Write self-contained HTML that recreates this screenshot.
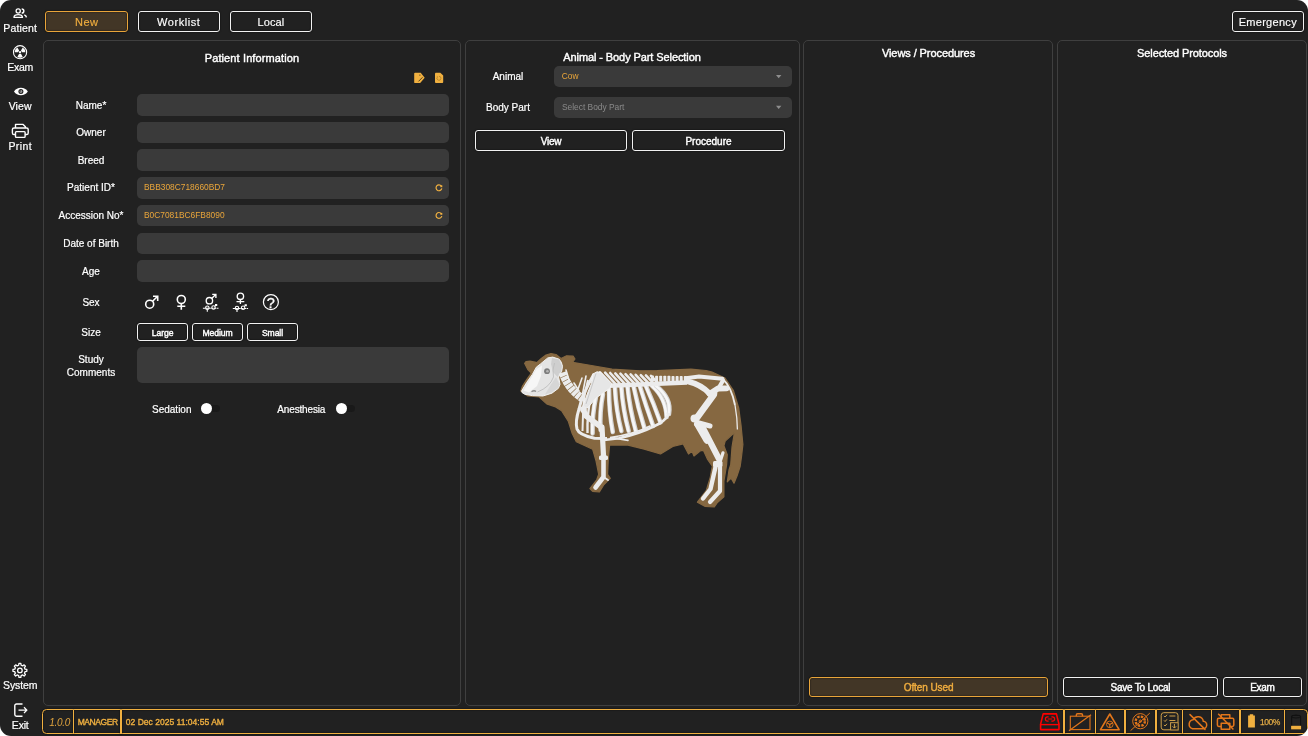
<!DOCTYPE html>
<html><head><meta charset="utf-8">
<style>
*{box-sizing:border-box;margin:0;padding:0}
html,body{width:1308px;height:736px;background:#fff;overflow:hidden}
body{font-family:"Liberation Sans",sans-serif;color:#fff}
#app{position:absolute;left:0;top:0;width:1308px;height:736px;background:#212121;border-radius:11px;overflow:hidden}
.abs{position:absolute}
#layer{position:absolute;left:0;top:0;width:1308px;height:736px;will-change:transform}
.side{position:absolute;-webkit-text-stroke:.2px #fff;left:0;width:40.400px;text-align:center;font-size:10.500px;line-height:12px;color:#fff;white-space:nowrap}
.side svg{display:block;margin:0 auto 1px}
.btn{position:absolute;-webkit-text-stroke:.4px currentColor;white-space:nowrap;box-shadow:0 0 1.500px #000,inset 0 0 1.500px #000;border:1.5px solid #f2f2f2;border-radius:3px;text-align:center;color:#fff;background:#212121}
.btn.act{border-color:#e9a53a;color:#f0ad3e;background:#423626}
.panel{position:absolute;top:39.750px;height:666.500px;border:1.500px solid #3f3f3f;border-radius:5px;background:#212121}
.ptitle{position:absolute;text-align:center;font-size:11px;white-space:nowrap}
.sb{font-weight:normal;-webkit-text-stroke:.4px currentColor}
.lbl{position:absolute;-webkit-text-stroke:.2px #fff;left:46px;width:90px;text-align:center;font-size:10px;line-height:13px}
.inp{position:absolute;left:137px;width:312px;height:21.6px;border-radius:5px;background:#3a3a3a;color:#e9a53a;font-size:8.400px;line-height:20.800px;padding-left:7px}
.sdiv{position:absolute;top:709.500px;width:1.300px;margin-left:.1px;height:24.200px;background:#f0b040;box-shadow:0 0 1.500px #000}
.stxt{position:absolute;top:716px;font-size:8.500px;color:#f0b040;line-height:12px;white-space:nowrap;-webkit-text-stroke:.35px #f0b040}
</style></head><body>
<div id="app"><div id="layer">

<!-- sidebar -->
<svg class="abs" style="left:0;top:0" width="42" height="736" viewBox="0 0 42 736">
<g fill="none" stroke="#fff" stroke-width="1.300">
<circle cx="18.200" cy="11" r="2.100"/>
<path d="M13.900 17.300c.2-1.700 2-2.600 4.300-2.600s4.100.9 4.300 2.600z" stroke-linejoin="round"/>
<path d="M21.700 8.900a2.100 2.100 0 0 1 0 4.200M24.300 14.900c1.300.5 2 1.300 2.100 2.500" stroke-width="1.500"/>
<circle cx="20.050" cy="52.200" r="6.600" stroke-width="1.100"/>
</g>
<circle cx="20.050" cy="52.200" r="1.100" fill="#fff"/><path d="M21.00 53.85L22.75 56.88A5.4 5.4 0 0 1 17.35 56.88L19.10 53.85Z M18.15 52.20L14.65 52.20A5.4 5.4 0 0 1 17.35 47.52L19.10 50.55Z M21.00 50.55L22.75 47.52A5.4 5.4 0 0 1 25.45 52.20L21.95 52.20Z" fill="#fff"/>
<path d="M14 91.500C15.600 89 18 87.800 20.900 87.800S26.200 89 27.800 91.500C26.200 94 23.800 95.200 20.900 95.200S15.600 94 14 91.500z" fill="#fff"/>
<circle cx="20.900" cy="91.500" r="2.500" fill="#212121"/><circle cx="20.900" cy="91.500" r="1.400" fill="#9a9a9a"/><circle cx="20.300" cy="90.900" r=".6" fill="#212121"/>
<g fill="none" stroke="#fff" stroke-width="1.400" stroke-linejoin="round">
<path d="M15.500 128v-3.600h7.600l2.300 2.300v1.300"/><path d="M15.500 134.500h-1.500a1.600 1.600 0 0 1-1.600-1.600v-3.300a1.600 1.600 0 0 1 1.600-1.600h12.600a1.600 1.600 0 0 1 1.600 1.600v3.300a1.600 1.600 0 0 1-1.600 1.600h-1.500"/><rect x="15.500" y="131.600" width="9.600" height="5.800" rx=".8"/>
<path d="M25.05 669.16 L26.84 669.47 L26.84 671.33 L25.05 671.64 L24.42 673.17 L25.46 674.65 L24.15 675.96 L22.67 674.92 L21.14 675.55 L20.83 677.34 L18.97 677.34 L18.66 675.55 L17.13 674.92 L15.65 675.96 L14.34 674.65 L15.38 673.17 L14.75 671.64 L12.96 671.33 L12.96 669.47 L14.75 669.16 L15.38 667.63 L14.34 666.15 L15.65 664.84 L17.13 665.88 L18.66 665.25 L18.97 663.46 L20.83 663.46 L21.14 665.25 L22.67 665.88 L24.15 664.84 L25.46 666.15 L24.42 667.63Z" stroke-width="1.300"/><circle cx="19.900" cy="670.400" r="2.300" stroke-width="1.300"/>
<path d="M22.500 704h-6a1.700 1.700 0 0 0-1.700 1.700v8.800a1.700 1.700 0 0 0 1.700 1.700h6" stroke-width="1.400"/>
<path d="M18.500 710.100h8.200M24 707.200l2.900 2.900-2.900 2.900" stroke-width="1.300"/>
</g>
</svg>
<div class="side" style="top:21.900px;letter-spacing:.15px">Patient</div>
<div class="side" style="top:61.100px;letter-spacing:-.27px">Exam</div>
<div class="side" style="top:100.300px;letter-spacing:.1px">View</div>
<div class="side" style="top:140px;letter-spacing:.4px">Print</div>
<div class="side" style="top:679.400px;letter-spacing:-.1px">System</div>
<div class="side" style="top:718.800px;letter-spacing:-.2px">Exit</div>

<!-- top buttons -->
<div class="btn act" style="left:45.400px;top:10.700px;width:82.500px;height:21.400px;font-size:11px;line-height:20.400px;-webkit-text-stroke:.15px currentColor;letter-spacing:.4px">New</div>
<div class="btn" style="left:137.500px;top:10.700px;width:82.500px;height:21.400px;font-size:11px;line-height:20.400px;-webkit-text-stroke:.15px currentColor;letter-spacing:.55px">Worklist</div>
<div class="btn" style="left:229.700px;top:10.700px;width:82.500px;height:21.400px;font-size:11px;line-height:20.400px;-webkit-text-stroke:.15px currentColor;letter-spacing:.14px">Local</div>
<div class="btn" style="left:1232px;top:10.700px;width:71.600px;height:21.400px;font-size:11px;line-height:20.400px;-webkit-text-stroke:.15px currentColor;letter-spacing:.29px">Emergency</div>

<!-- panels -->
<div class="panel" style="left:42.500px;width:418.850px"></div>
<div class="panel" style="left:465.350px;width:334.400px"></div>
<div class="panel" style="left:803.450px;width:249.950px"></div>
<div class="panel" style="left:1056.800px;width:250.350px"></div>

<!-- patient info -->
<div class="ptitle sb" style="left:43px;width:418px;top:52px;letter-spacing:.12px">Patient Information</div>
<div class="lbl" style="top:98.5px">Name*</div><div class="inp" style="top:94px"></div>
<div class="lbl" style="top:125.9px">Owner</div><div class="inp" style="top:121.700px"></div>
<div class="lbl" style="top:153.7px">Breed</div><div class="inp" style="top:149.400px"></div>
<div class="lbl" style="top:181.1px">Patient ID*</div><div class="inp" style="top:177.100px">BBB308C718660BD7</div>
<div class="lbl" style="top:208.6px">Accession No*</div><div class="inp" style="top:204.800px">B0C7081BC6FB8090</div>
<div class="lbl" style="top:237.0px">Date of Birth</div><div class="inp" style="top:232.500px"></div>
<div class="lbl" style="top:264.7px">Age</div><div class="inp" style="top:260.200px"></div>
<div class="lbl" style="top:296.4px">Sex</div>
<div class="lbl" style="top:326.0px">Size</div>
<div class="btn" style="left:137.2px;top:323.200px;width:50.800px;height:17.600px;font-size:8.600px;line-height:18.600px;letter-spacing:-.1px">Large</div>
<div class="btn" style="left:192.1px;top:323.200px;width:50.800px;height:17.600px;font-size:8.600px;line-height:18.600px;letter-spacing:-.1px">Medium</div>
<div class="btn" style="left:247.1px;top:323.200px;width:50.800px;height:17.600px;font-size:8.600px;line-height:18.600px;letter-spacing:-.1px">Small</div>
<div class="lbl" style="top:352.7px">Study<br>Comments</div><div class="inp" style="top:347px;height:36px"></div>
<div class="abs" style="left:152px;top:403.500px;font-size:10px;-webkit-text-stroke:.2px #fff">Sedation</div>
<div class="abs" style="left:277.300px;top:403.500px;font-size:10px;-webkit-text-stroke:.2px #fff;letter-spacing:-.15px">Anesthesia</div>


<!-- small icons -->
<svg class="abs" style="left:412px;top:70px" width="36" height="16" viewBox="412 70 36 16">
<path d="M415.100 72.700h5.600l4 5.100-4.500 5.300h-5.100a.9.900 0 0 1-.9-.9v-8.600a.9.900 0 0 1 .9-.9z" fill="#f0b040"/>
<path d="M418.500 81.400l4-4.100" stroke="#2a2418" stroke-width=".8" fill="none"/><circle cx="419.900" cy="75.100" r=".55" fill="#2a2418"/>
<path d="M435.900 72.700h4.400l2.900 2.900v6.500a.9.900 0 0 1-.9.900h-6.400a.9.900 0 0 1-.9-.9v-8.500a.9.900 0 0 1 .9-.9z" fill="#f0b040"/>
<path d="M437.200 77.300a2 2 0 1 0 1.800-1" stroke="#b8862a" stroke-width=".9" fill="none"/><path d="M436.600 76.300l1.500.2-.3 1.400z" fill="#b8862a"/>
</svg>
<svg class="abs" style="left:434px;top:182px" width="10" height="40" viewBox="434 182 10 40">
<g fill="none" stroke="#f0b040" stroke-width="1.200"><path d="M441.300 186.100a2.900 2.900 0 1 0 .5 2.300"/><path d="M441.300 189.600a2.900 2.900 0 1 0 .5 2.300" transform="translate(0,24.100)"/></g>
<rect x="440.400" y="185.300" width="1.900" height="1.900" fill="#f0b040"/><rect x="440.400" y="212.900" width="1.900" height="1.900" fill="#f0b040"/>
</svg>
<svg class="abs" style="left:140px;top:290px" width="150" height="26" viewBox="140 290 150 26">
<g fill="none" stroke="#fff" stroke-width="1.600">
<circle cx="149.700" cy="304.200" r="4"/><path d="M152.600 301.300l5-5M153 296.300h4.700v4.700"/>
<circle cx="181.300" cy="299.500" r="4"/><path d="M181.300 303.500v6.300M177.300 306.300h8"/>
</g>
<g fill="none" stroke="#fff" stroke-width="1.350">
<circle cx="209.400" cy="300.700" r="3.200"/><path d="M211.700 298.400l4.200-4.200M212.200 294.300h3.700v3.700"/>
<circle cx="240.400" cy="296.300" r="3.200"/><path d="M240.400 299.500v4.500M236.500 301.600h7.800"/>
</g>
<g fill="none" stroke="#fff" stroke-width="1.100">
<circle cx="207.300" cy="307.700" r="1.700"/><path d="M207.300 309.400v2.300"/>
<circle cx="213.500" cy="307.500" r="1.700"/><path d="M214.700 306.300l1.900-1.600M215 304.600h1.700v1.500"/>
<path d="M202.900 308.200h15.600" stroke-dasharray="2.300 .5"/>
<circle cx="237" cy="308" r="1.700"/><path d="M237 309.700v2.200"/>
<circle cx="243.100" cy="307.700" r="1.700"/><path d="M244.300 306.500l1.900-1.600M244.600 304.800h1.700v1.500"/>
<path d="M232.800 308.500h15.300" stroke-dasharray="2.300 .5"/>
<circle cx="270.900" cy="302.100" r="7.500" stroke-width="1.200"/>
</g>
<text x="270.900" y="307.500" font-size="14.500" stroke="#fff" stroke-width=".3" fill="#fff" text-anchor="middle" font-family="Liberation Sans, sans-serif">?</text>
</svg>
<div class="abs" style="left:203px;top:405.300px;width:17px;height:7px;border-radius:4px;background:#191919"></div>
<div class="abs" style="left:200.900px;top:403.200px;width:11.200px;height:11.200px;border-radius:50%;background:#fff"></div>
<div class="abs" style="left:338px;top:405.300px;width:17px;height:7px;border-radius:4px;background:#191919"></div>
<div class="abs" style="left:335.700px;top:403.200px;width:11.200px;height:11.200px;border-radius:50%;background:#fff"></div>

<!-- animal panel -->
<div class="ptitle sb" style="left:465px;width:334px;top:51px;letter-spacing:-.09px">Animal - Body Part Selection</div>
<div class="lbl" style="left:463px;top:70px">Animal</div>
<div class="inp" style="left:554px;width:238px;top:66.100px;height:21px;line-height:21px;padding-left:7.800px">Cow</div>
<div class="lbl" style="left:463px;top:101px">Body Part</div>
<div class="inp" style="left:554px;width:238px;top:97px;height:21px;line-height:21px;padding-left:8px;color:#8a8a8a">Select Body Part</div>
<div class="btn" style="left:474.800px;top:129.900px;width:152.500px;height:21.300px;font-size:10px;line-height:22.400px;letter-spacing:-.2px">View</div>
<div class="btn" style="left:632px;top:129.900px;width:153px;height:21.300px;font-size:10px;line-height:22.400px">Procedure</div>

<svg class="abs" style="left:774px;top:72px" width="10" height="40" viewBox="774 72 10 40"><path d="M776 75h5.400l-2.700 3.200zM776 105.700h5.400l-2.700 3.200z" fill="#8e8e8e"/></svg>
<svg class="abs" style="left:500px;top:340px" width="260" height="180" viewBox="500 340 260 180">
<path d="M520.8 391.0 L522.5 386.0 L527.0 379.0 L531.3 373.0 L527.8 369.5 L524.6 363.3 L526.0 361.6 L530.0 361.2 L535.0 362.2 L536.8 362.6 L541.0 358.8 L546.0 355.0 L551.0 353.5 L556.0 354.5 L561.0 358.5 L563.5 357.2 L566.6 355.8 L573.1 356.2 L575.0 359.0 L572.5 362.3 L591.5 365.5 L612.0 369.2 L640.0 370.8 L657.0 370.6 L691.0 369.2 L706.0 370.5 L712.0 372.0 L725.0 378.0 L733.3 390.3 L738.7 407.9 L741.0 425.0 L742.9 444.5 L741.5 456.7 L740.2 466.2 L737.0 476.0 L734.0 483.2 L731.0 478.0 L727.3 481.8 L729.0 470.0 L730.7 464.8 L732.0 447.2 L734.5 432.0 L733.4 433.6 L725.2 441.1 L723.9 445.8 L727.3 454.6 L726.6 464.8 L723.9 481.1 L723.9 496.8 L717.1 502.9 L714.3 507.0 L704.8 506.3 L697.4 502.2 L706.2 490.7 L710.3 477.1 L712.3 466.2 L707.6 459.4 L703.5 450.6 L700.8 450.6 L694.0 456.0 L692.0 451.3 L688.5 454.0 L683.1 443.8 L672.8 446.5 L660.5 454.0 L644.2 449.2 L628.0 445.1 L609.6 445.1 L608.2 460.8 L607.6 474.3 L610.3 478.4 L603.5 485.2 L599.4 492.0 L592.6 491.3 L589.9 488.6 L596.7 479.8 L598.7 474.3 L596.0 460.8 L592.6 449.2 L576.3 441.7 L572.2 433.6 L568.4 421.5 L561.6 410.7 L554.8 406.6 L546.7 403.9 L539.2 397.0 L527.7 396.0Z" fill="#866841" stroke="#866841" stroke-width="1.2" stroke-linejoin="round"/>
<path d="M596 397 Q592 415 592.6 433.4" fill="none" stroke="#d4d4d4" stroke-width="4.5" stroke-linecap="round"/>
<path d="M595.7 397 Q591.7 415 592.3000000000001 433.4" fill="none" stroke="#f7f7f7" stroke-width="2.7" stroke-linecap="round"/>
<path d="M603 394 Q599.5 412 600.6 430" fill="none" stroke="#d4d4d4" stroke-width="4.5" stroke-linecap="round"/>
<path d="M602.7 394 Q599.2 412 600.3000000000001 430" fill="none" stroke="#f7f7f7" stroke-width="2.7" stroke-linecap="round"/>
<path d="M609 389 Q609 412 612.8 432" fill="none" stroke="#d4d4d4" stroke-width="4.5" stroke-linecap="round"/>
<path d="M608.7 389 Q608.7 412 612.5 432" fill="none" stroke="#f7f7f7" stroke-width="2.7" stroke-linecap="round"/>
<path d="M615 388 Q616 410 621.4 431" fill="none" stroke="#d4d4d4" stroke-width="4.5" stroke-linecap="round"/>
<path d="M614.7 388 Q615.7 410 621.1 431" fill="none" stroke="#f7f7f7" stroke-width="2.7" stroke-linecap="round"/>
<path d="M621.4 387 Q623 410 628.7 431" fill="none" stroke="#d4d4d4" stroke-width="4.5" stroke-linecap="round"/>
<path d="M621.1 387 Q622.7 410 628.4000000000001 431" fill="none" stroke="#f7f7f7" stroke-width="2.7" stroke-linecap="round"/>
<path d="M627.5 386.3 Q630 410 636 431.5" fill="none" stroke="#d4d4d4" stroke-width="4.5" stroke-linecap="round"/>
<path d="M627.2 386.3 Q629.7 410 635.7 431.5" fill="none" stroke="#f7f7f7" stroke-width="2.7" stroke-linecap="round"/>
<path d="M633.6 386.3 Q638 408 644.6 428.5" fill="none" stroke="#d4d4d4" stroke-width="4.5" stroke-linecap="round"/>
<path d="M633.3000000000001 386.3 Q637.7 408 644.3000000000001 428.5" fill="none" stroke="#f7f7f7" stroke-width="2.7" stroke-linecap="round"/>
<path d="M639.7 385.7 Q646 406 653.2 426" fill="none" stroke="#d4d4d4" stroke-width="4.5" stroke-linecap="round"/>
<path d="M639.4000000000001 385.7 Q645.7 406 652.9000000000001 426" fill="none" stroke="#f7f7f7" stroke-width="2.7" stroke-linecap="round"/>
<path d="M645.8 385.7 Q654 404 660.5 422.4" fill="none" stroke="#d4d4d4" stroke-width="4.5" stroke-linecap="round"/>
<path d="M645.5 385.7 Q653.7 404 660.2 422.4" fill="none" stroke="#f7f7f7" stroke-width="2.7" stroke-linecap="round"/>
<path d="M652 385.7 Q666 398 666.6 417" fill="none" stroke="#d4d4d4" stroke-width="4.5" stroke-linecap="round"/>
<path d="M651.7 385.7 Q665.7 398 666.3000000000001 417" fill="none" stroke="#f7f7f7" stroke-width="2.7" stroke-linecap="round"/>
<path d="M656 385.7 Q672 398 669 414" fill="none" stroke="#d4d4d4" stroke-width="4.5" stroke-linecap="round"/>
<path d="M655.7 385.7 Q671.7 398 668.7 414" fill="none" stroke="#f7f7f7" stroke-width="2.7" stroke-linecap="round"/>
<path d="M594 374 Q582 395 579 409 Q575 422 577 429 Q579 435 594.5 438.3 L607 438.5" fill="none" stroke="#ececec" stroke-width="3"/>
<path d="M588 380 Q583 398 583 415 L582.5 431" fill="none" stroke="#ececec" stroke-width="2"/>
<path d="M590.5 398 Q587 415 587.5 433" fill="none" stroke="#ececec" stroke-width="2.4"/>
<path d="M669 414 Q664 422 655.6 425.5 Q640 433.5 619 438.3 L604 440" fill="none" stroke="#ececec" stroke-width="2.6" stroke-linecap="round"/>
<path d="M650 426 Q635 434 610 437.5 L628 440.4" fill="none" stroke="#ececec" stroke-width="1.6" stroke-linecap="round"/>
<path d="M611.0 384.5 L600.0 372.3" stroke="#ececec" stroke-width="2.6" stroke-linecap="round"/>
<path d="M615.6 384.2 L605.1 372.7" stroke="#ececec" stroke-width="2.6" stroke-linecap="round"/>
<path d="M620.2 384.0 L610.2 373.0" stroke="#ececec" stroke-width="2.6" stroke-linecap="round"/>
<path d="M624.8 383.8 L615.3 373.4" stroke="#ececec" stroke-width="2.6" stroke-linecap="round"/>
<path d="M629.4 383.5 L620.4 373.7" stroke="#ececec" stroke-width="2.6" stroke-linecap="round"/>
<path d="M634.0 383.2 L625.5 374.1" stroke="#ececec" stroke-width="2.6" stroke-linecap="round"/>
<path d="M638.6 383.0 L630.6 374.4" stroke="#ececec" stroke-width="2.6" stroke-linecap="round"/>
<path d="M643.2 382.8 L635.7 374.8" stroke="#ececec" stroke-width="2.6" stroke-linecap="round"/>
<path d="M647.8 382.5 L640.8 375.1" stroke="#ececec" stroke-width="2.6" stroke-linecap="round"/>
<path d="M652.4 382.2 L645.9 375.4" stroke="#ececec" stroke-width="2.6" stroke-linecap="round"/>
<path d="M657.0 382.0 L651.0 375.8" stroke="#ececec" stroke-width="2.6" stroke-linecap="round"/>
<path d="M603 386 L640 384.5 L687 382.5" fill="none" stroke="#ececec" stroke-width="4.4"/>
<rect x="651.0" y="375.6" width="3" height="6" rx="0.8" fill="#ececec"/>
<rect x="655.1" y="375.7" width="3" height="6" rx="0.8" fill="#ececec"/>
<rect x="659.2" y="375.7" width="3" height="6" rx="0.8" fill="#ececec"/>
<rect x="663.3" y="375.8" width="3" height="6" rx="0.8" fill="#ececec"/>
<rect x="667.4" y="375.8" width="3" height="6" rx="0.8" fill="#ececec"/>
<rect x="671.5" y="375.9" width="3" height="6" rx="0.8" fill="#ececec"/>
<rect x="675.6" y="375.9" width="3" height="6" rx="0.8" fill="#ececec"/>
<rect x="679.7" y="376.0" width="3" height="6" rx="0.8" fill="#ececec"/>
<rect x="683.8" y="376.0" width="3" height="6" rx="0.8" fill="#ececec"/>
<path d="M686 378.200 L699 376.400 L722.500 378.800" fill="none" stroke="#ececec" stroke-width="4" stroke-linecap="round"/>
<path d="M688 381.500 Q701 384.500 709.500 393.500" fill="none" stroke="#ececec" stroke-width="5.800" stroke-linecap="round"/>
<path d="M709.500 394 L718 388.500 L726.500 388.300" fill="none" stroke="#ececec" stroke-width="5.800" stroke-linecap="round" stroke-linejoin="round"/>
<path d="M719 387.500 L723 380.500" fill="none" stroke="#ececec" stroke-width="4.200" stroke-linecap="round"/>
<path d="M722.500 378.600 Q731.500 387 735 405" fill="none" stroke="#ececec" stroke-width="1.900"/>
<path d="M735 405 Q737.300 418 737.400 429.500" fill="none" stroke="#ececec" stroke-width="1.300"/>
<path d="M713.500 395 L696 419" stroke="#ececec" stroke-width="6.500" stroke-linecap="round"/>
<circle cx="694.500" cy="418.500" r="4" fill="#ececec"/>
<circle cx="713.500" cy="393.500" r="3.800" fill="#ececec"/>
<path d="M697 424 L703 428 L719 459" fill="none" stroke="#ececec" stroke-width="6" stroke-linecap="round" stroke-linejoin="round"/>
<path d="M699 423 L710 426" stroke="#ececec" stroke-width="5" stroke-linecap="round"/>
<path d="M698 424.500 L707 440" stroke="#ececec" stroke-width="7.400" stroke-linecap="round"/>
<path d="M720 462 L723 452.8" stroke="#ececec" stroke-width="3.2" stroke-linecap="round"/>
<rect x="713" y="461" width="9.5" height="6" rx="1.5" fill="#ececec"/>
<path d="M715.5 467 L710.5 489 L703 498.5" fill="none" stroke="#ececec" stroke-width="4.4" stroke-linecap="round" stroke-linejoin="round"/>
<path d="M720 467 L720 491 L710 502" fill="none" stroke="#ececec" stroke-width="4.2" stroke-linecap="round" stroke-linejoin="round"/>
<path d="M521.7 390.8 L526.6 382.6 L532.3 374.5 L536.4 367.1 L540.5 363.9 L547.8 357.9 L552.7 357.1 L559.2 359.2 L561.3 362.2 L562.5 366.3 L561.7 371.2 L558.6 376.9 L560.0 384.3 L558.4 388.3 L551.9 393.2 L542.9 396.0 L532.3 395.6 L525.0 394.3 L522.0 392.5Z" fill="#e4e4e4" stroke="#f2f2f2" stroke-width="1" stroke-linejoin="round"/>
<path d="M552 358 L559 359.500 L562 366 L561 371.500 L557.500 377 L553 372 L551 364Z" fill="#cfcfcf"/>
<path d="M523.500 390.500 L536.500 369 L542 365.500 L541 376 L537 386 L529 392.500Z" fill="#f6f6f6"/>
<path d="M556 377 L559.500 384.500 L558 388 L551.500 392.500 L545 394.500 L550 386Z" fill="#d6d6d6"/>
<path d="M554.500 363 Q552 370 553.500 377 Q550 387 537.500 392" fill="none" stroke="#bdbdbd" stroke-width=".9"/>
<circle cx="547" cy="371.200" r="2.900" fill="#7c7c7c"/><circle cx="547.400" cy="371.200" r="1.300" fill="#b5b5b5"/>
<path d="M531.500 391.800 q2.500 -2 4.500 -.300" fill="none" stroke="#8f8f8f" stroke-width="1.300"/>
<path d="M562.500 372.500 Q568 389 582.500 398.500" fill="none" stroke="#ececec" stroke-width="8" stroke-dasharray="3.800 0.600"/>
<path d="M566 370 L569 380 M574 383 L579 391 M582 378 L577 392 M586 376 L582.500 394" stroke="#ececec" stroke-width="1.600" stroke-linecap="round"/>
<path d="M592.9 374.0 L597.0 371.8 L601.0 372.6 L611.9 383.5 L610.0 388.0 L605.1 391.6 L596.0 398.0 L588.0 407.5 L584.5 408.5 L582.7 406.6 L588.0 392.0 L591.5 383.5Z" fill="#e6e6e6" stroke="#f4f4f4" stroke-width="1" stroke-linejoin="round"/>
<path d="M596 373.500 L586 404" stroke="#c4c4c4" stroke-width="0.900"/>
<path d="M583 409 L586 416 L601 427" fill="none" stroke="#ececec" stroke-width="5.500" stroke-linecap="round" stroke-linejoin="round"/>
<circle cx="583.500" cy="409.500" r="3.300" fill="#ececec"/>
<path d="M602 427 L603.500 456" stroke="#ececec" stroke-width="5.200" stroke-linecap="round"/>
<rect x="599" y="455.500" width="9" height="4.600" rx="1.500" fill="#ececec"/>
<path d="M603.500 460 L603.500 477 L595.500 487.500" fill="none" stroke="#ececec" stroke-width="4.600" stroke-linecap="round" stroke-linejoin="round"/>
<path d="M605 478 L608 480" stroke="#ececec" stroke-width="2" stroke-linecap="round"/>
</svg>

<!-- views / selected -->
<div class="ptitle sb" style="left:804px;width:249px;top:47px;letter-spacing:-.08px">Views / Procedures</div>
<div class="ptitle sb" style="left:1057px;width:250px;top:47px;letter-spacing:-.1px">Selected Protocols</div>
<div class="btn act" style="left:808.800px;top:676.700px;width:239.500px;height:20.400px;font-size:10px;line-height:20.600px;letter-spacing:-.09px">Often Used</div>
<div class="btn" style="left:1062.700px;top:676.700px;width:155.500px;height:20.400px;font-size:10px;line-height:20.600px;letter-spacing:-.22px">Save To Local</div>
<div class="btn" style="left:1223.200px;top:676.700px;width:78.500px;height:20.400px;font-size:10px;line-height:20.600px;letter-spacing:-.27px">Exam</div>

<!-- status bar -->
<div class="abs" id="sb" style="left:42.300px;top:708.750px;width:1265.500px;height:25.700px;border:1.500px solid #f0b040;border-radius:4.500px;box-shadow:0 0 1.500px #000,inset 0 0 1.500px #000"></div>
<div class="sdiv" style="left:72.600px"></div><div class="sdiv" style="left:120.400px"></div>
<div class="sdiv" style="left:1063.300px"></div><div class="sdiv" style="left:1094.600px"></div><div class="sdiv" style="left:1124.200px"></div><div class="sdiv" style="left:1155.400px"></div><div class="sdiv" style="left:1181.800px"></div><div class="sdiv" style="left:1210.700px"></div><div class="sdiv" style="left:1239.300px"></div><div class="sdiv" style="left:1283.850px"></div>
<div class="stxt" style="left:49.200px;top:716.800px;font-style:italic;font-size:10px;letter-spacing:-.3px;-webkit-text-stroke:0;color:#e0a43e">1.0.0</div>
<div class="stxt" style="left:77.700px;letter-spacing:-.42px">MANAGER</div>
<div class="stxt" style="left:125.800px;letter-spacing:.02px">02 Dec 2025 11:04:55 AM</div>
<div class="stxt" style="left:1260px;-webkit-text-stroke:.25px #e0aa45;color:#e0aa45;letter-spacing:-.5px">100%</div>
<svg class="abs" style="left:1036px;top:710px" width="270" height="24" viewBox="1036 710 270 24">
<g fill="none" stroke="#f00" stroke-width="1.600" stroke-linejoin="round"><path d="M1043.200 713.900h13.200l2.600 10.200v5.500h-18.400v-5.500z"/><path d="M1040.600 724.600h18.400" stroke-width="1.400"/><path d="M1048.600 716.800h-1a2.200 2.200 0 0 0 0 4.400h1M1051.400 716.800h1a2.200 2.200 0 0 1 0 4.400h-1M1047.800 719h4.400" stroke-width="1.200"/></g>
<g fill="none" stroke="#e2761b" stroke-width="1.100"><rect x="1070.300" y="716.200" width="19.700" height="13.400"/><path d="M1076.300 716.200v-1.300a1.200 1.200 0 0 1 1.200-1.200h3.800a1.200 1.200 0 0 1 1.200 1.200v1.300" stroke-width="1.400"/><path d="M1069 730.800l22-16.100" stroke-width="1.200"/></g>
<g fill="none" stroke="#e2761b" stroke-width="1.600" stroke-linejoin="round"><path d="M1109.800 714l9.300 15.700h-18.600z"/></g>
<g stroke="#e2761b" fill="none"><circle cx="1109.800" cy="724.400" r="3.300" stroke-width="0.900"/><path d="M1109.800 724.400v3.300M1109.800 724.400l-2.900-1.600M1109.800 724.400l2.900-1.600" stroke-width="1.100"/></g>
<g fill="none" stroke="#e2761b"><circle cx="1140.300" cy="721.200" r="7.600" stroke-width="1"/><circle cx="1140.300" cy="721.200" r="4.600" stroke-width="2.400" stroke-dasharray="2.400 1.200"/><circle cx="1140.300" cy="721.200" r="1.200" stroke-width="1"/><path d="M1130.600 730.600l19.200-17.500" stroke-width="1"/></g>
<g fill="none" stroke="#cfa04a" stroke-width="1"><path d="M1170 729.800h-6.200a2.600 2.600 0 0 1-2.600-2.600v-11.900a2.600 2.600 0 0 1 2.600-2.600h11.600a2.600 2.600 0 0 1 2.600 2.600v7"/><path d="M1164 715.900l1.100 1.100 1.900-2.200M1164 720.400l1.100 1.100 1.900-2.200M1164 724.900l1.100 1.100 1.900-2.200M1169.400 716h6M1169.400 720.500h6"/><rect x="1170.600" y="722.700" width="7.600" height="7.300"/><path d="M1174.400 724v4M1172.600 726.300l1.800 1.800 1.800-1.800"/></g>
<g fill="none" stroke="#e2761b" stroke-width="1.500" stroke-linecap="round" stroke-linejoin="round"><path d="M1192.500 728.700h10.200a3.700 3.700 0 0 0 .6-7.400 5.300 5.300 0 0 0-10-1.600 4.600 4.600 0 0 0-.8 9z"/><path d="M1190 714.600l15 14.800"/></g>
<g fill="none" stroke="#e2761b" stroke-width="1.500" stroke-linejoin="round"><path d="M1221.200 718.200v-3.400h8.600v3.400M1221 726.500h-2.200a1.400 1.400 0 0 1-1.400-1.400v-5.400a1.400 1.400 0 0 1 1.400-1.400h13.600a1.400 1.400 0 0 1 1.400 1.400v5.400a1.400 1.400 0 0 1-1.400 1.400h-2.200"/><rect x="1221.200" y="723.300" width="8.600" height="6"/><path d="M1218.200 713.700l15.200 15.800"/></g>
<path d="M1249.800 714.300h3.400v1.200h1.700v12.100h-6.800v-12.100h1.700z" fill="#f0b040"/>
<path d="M1291.600 716.600a4.500 1.400 0 0 1 9 0v12.600h-9z" fill="#222" stroke="#111" stroke-width="1.100"/><ellipse cx="1296.100" cy="716.600" rx="4.500" ry="1.400" fill="none" stroke="#111" stroke-width="1"/>
<rect x="1291.100" y="725.800" width="10" height="3.600" fill="#f0b040"/>
</svg>

</div></div>
</body></html>
